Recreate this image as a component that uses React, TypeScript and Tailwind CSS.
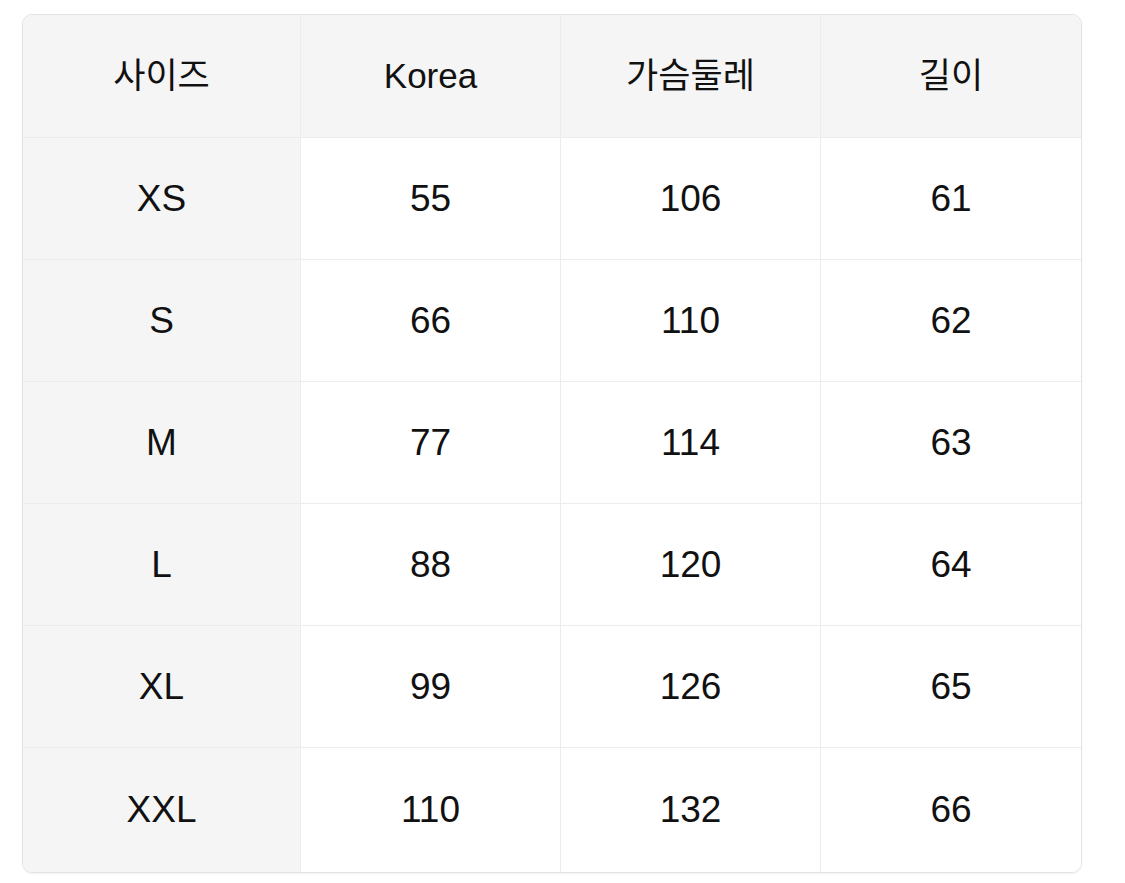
import React from "react";

const rows = [
  ["XS", "55", "106", "61"],
  ["S", "66", "110", "62"],
  ["M", "77", "114", "63"],
  ["L", "88", "120", "64"],
  ["XL", "99", "126", "65"],
  ["XXL", "110", "132", "66"],
];

const header = ["사이즈", "Korea", "가슴둘레", "길이"];

export default function App() {
  return (
    <div className="w-[1125px] h-[883px] bg-white pt-[14px] pl-[22px]" style={{ fontFamily: '"Liberation Sans", "Noto Sans CJK KR", sans-serif' }}>
      <div className="w-[1060px] rounded-[10px] border border-[#e3e3e3] shadow-[0_1px_2px_rgba(0,0,0,0.06)] overflow-hidden">
        <div className="grid grid-cols-[278px_260px_260px_1fr]">
          {header.map((h, i) => (
            <div
              key={h}
              className={`h-[123px] flex items-center justify-center bg-[#f5f5f5] text-[35px] text-[#111] border-b border-[#ececec] ${i < 3 ? "border-r" : ""}`}
            >
              {h}
            </div>
          ))}
          {rows.map((r, ri) =>
            r.map((c, ci) => (
              <div
                key={`${ri}-${ci}`}
                className={`${ri === rows.length - 1 ? "h-[124px]" : "h-[122px]"} flex items-center justify-center text-[37px] text-[#111] border-[#ececec] ${ci === 0 ? "bg-[#f5f5f5]" : "bg-white"} ${ci < 3 ? "border-r" : ""} ${ri < rows.length - 1 ? "border-b" : ""}`}
              >
                {c}
              </div>
            ))
          )}
        </div>
      </div>
    </div>
  );
}
